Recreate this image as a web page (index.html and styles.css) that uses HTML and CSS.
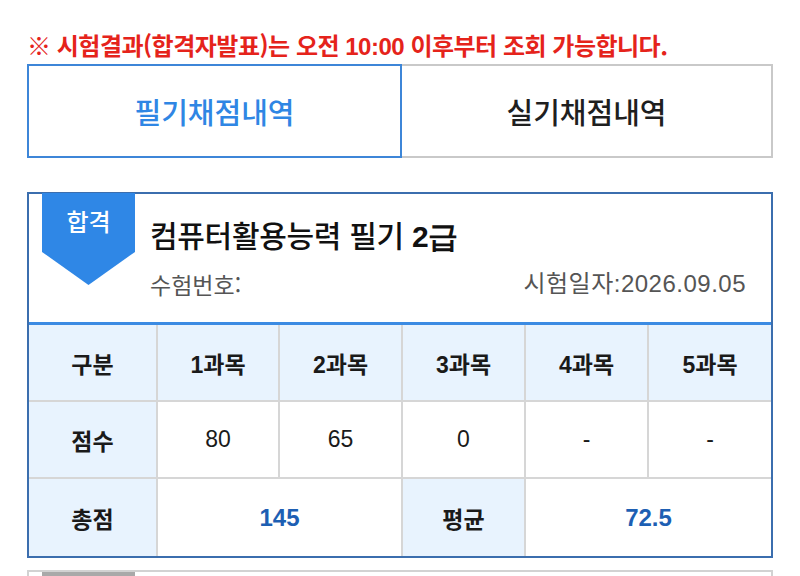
FILE: index.html
```html
<!DOCTYPE html>
<html lang="ko">
<head>
<meta charset="utf-8">
<link rel="stylesheet" href="styles.css">
</head>
<body>
<p class="notice">※ 시험결과(합격자발표)는 오전 <b>10:00</b> 이후부터 조회 가능합니다.</p>
<div class="tabs">
  <div class="tab active">필기채점내역</div>
  <div class="tab">실기채점내역</div>
</div>
<section class="card">
  <div class="card-head">
    <div class="badge">합격</div>
    <h2 class="title">컴퓨터활용능력 필기 <b>2급</b></h2>
    <div class="meta">
      <span>수험번호:</span>
      <span class="date">시험일자:2026.09.05</span>
    </div>
  </div>
  <div class="grid">
    <div class="cell th">구분</div>
    <div class="cell th">1과목</div>
    <div class="cell th">2과목</div>
    <div class="cell th">3과목</div>
    <div class="cell th">4과목</div>
    <div class="cell th">5과목</div>
    <div class="cell th">점수</div>
    <div class="cell">80</div>
    <div class="cell">65</div>
    <div class="cell">0</div>
    <div class="cell">-</div>
    <div class="cell">-</div>
    <div class="cell th">총점</div>
    <div class="cell span2 total">145</div>
    <div class="cell th">평균</div>
    <div class="cell span2 total">72.5</div>
  </div>
</section>
<section class="card next">
  <div class="badge gray"></div>
</section>
</body>
</html>
```

FILE: styles.css
```css
* { box-sizing: border-box; }
html { height: 576px; overflow: hidden; }
html, body { margin: 0; padding: 0; background: #fff; }
body {
  padding: 0 27px;
  width: 800px;
  height: 576px;
  overflow: hidden;
  font-family: "Noto Sans CJK KR", "Noto Sans", "Liberation Sans", sans-serif;
  color: #222;
}
.notice {
  margin: 0 0 3px;
  padding-top: 29px;
  height: 61px;
  line-height: 32px;
  font-size: 24px;
  font-weight: 700;
  color: #e5231b;
  letter-spacing: -0.5px;
  white-space: nowrap;
}
.notice b { font-family: "Liberation Sans", sans-serif; font-weight: 700; }
.tabs {
  display: grid;
  grid-template-columns: 375px 1fr;
  height: 94px;
}
.tab {
  display: flex;
  align-items: center;
  justify-content: center;
  font-size: 29px;
  font-weight: 500;
  border: 2px solid #c9c9c9;
  border-left: none;
  color: #1f1f1f;
}
.tab.active {
  border: 2px solid #3d86d8;
  color: #2f86e4;
}
.card {
  margin-top: 34px;
  border: 2px solid #3b6eae;
  position: relative;
}
.card-head {
  position: relative;
  height: 128px;
  padding: 19px 25px 0 121px;
}
.badge {
  position: absolute;
  left: 13px;
  top: -1px;
  width: 93px;
  height: 92px;
  background: #2f87e6;
  clip-path: polygon(0 0, 100% 0, 100% 64%, 50% 100%, 0 64%);
  color: #fff;
  font-size: 24px;
  font-weight: 500;
  text-align: center;
  line-height: 56px;
}
.title {
  margin: 0;
  height: 42px;
  font-size: 30px;
  font-weight: 500;
  line-height: 42px;
  letter-spacing: -0.3px;
  color: #111;
  white-space: nowrap;
}
.title b { font-family: "Liberation Sans", sans-serif; font-weight: 700; }
.meta {
  display: flex;
  justify-content: space-between;
  margin-top: 14px;
  font-size: 23px;
  line-height: 30px;
  color: #555;
}
.meta .date {
  font-family: "Liberation Sans", "Noto Sans CJK KR", sans-serif;
  font-size: 24px;
  letter-spacing: 0.5px;
}
.grid {
  display: grid;
  grid-template-columns: 129px 122px 123px 123px 123px 1fr;
  grid-auto-rows: 77px;
  border-top: 3px solid #3b8be3;
}
.cell {
  display: flex;
  align-items: center;
  justify-content: center;
  font-size: 23px;
  border-right: 2px solid #d6d6d6;
  border-bottom: 2px solid #d6d6d6;
  font-family: "Liberation Sans", "Noto Sans CJK KR", sans-serif;
  color: #1a1a1a;
}
.cell:nth-child(6n) { border-right: none; }
.grid .cell:nth-last-child(-n+4) { border-bottom: none; }
.cell.th {
  background: #e8f3fe;
  font-weight: 700;
}
.cell:nth-child(6n+1) { font-family: "Noto Sans CJK KR", sans-serif; }
.span2 { grid-column: span 2; }
.cell.total { color: #1d5fb3; font-weight: 700; font-size: 24px; }
.cell:last-child { border-right: none; }
.card.next {
  margin-top: 12px;
  border: 2px solid #d2d2d2;
  border-bottom: none;
  height: 7px;
  overflow: hidden;
}
.badge.gray {
  background: #a9a9a9;
  top: 0;
}
```
